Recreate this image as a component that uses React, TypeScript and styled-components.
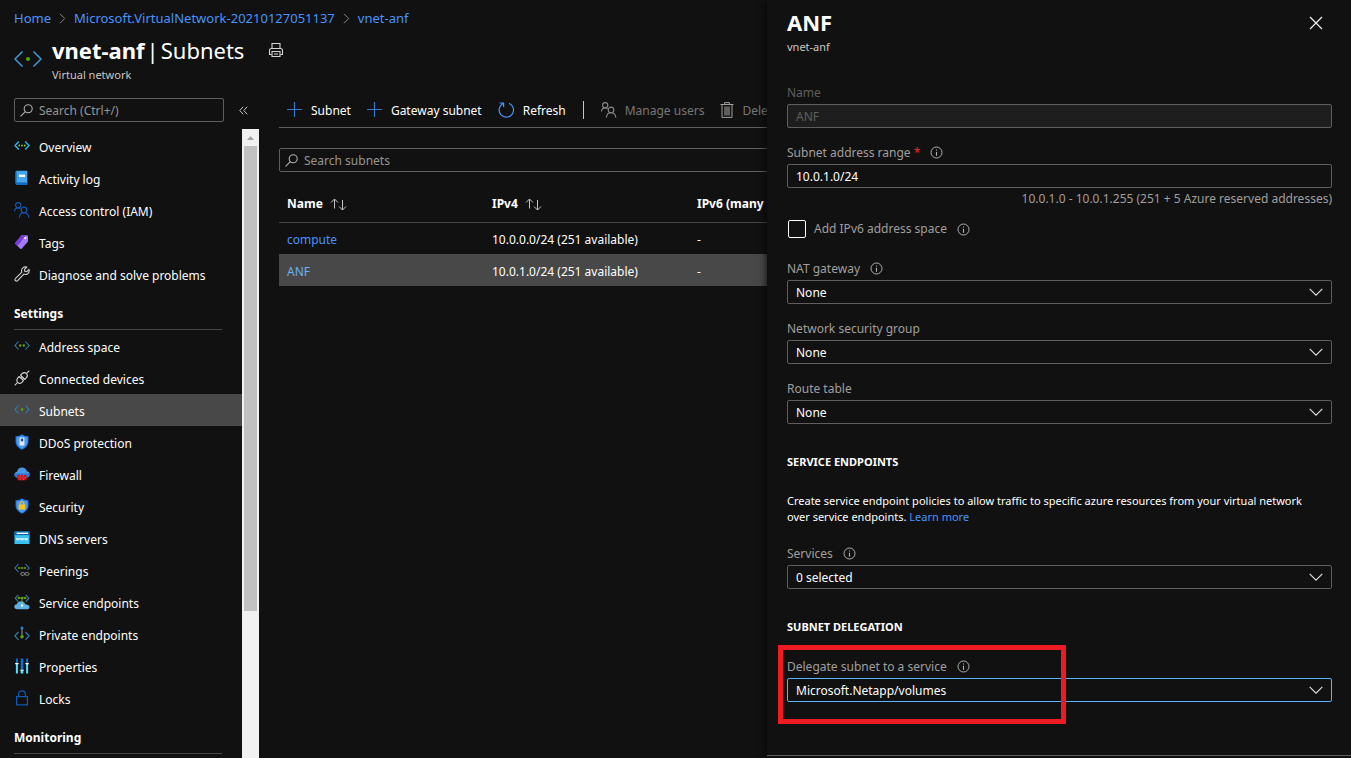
import React from "react";
import styled, { createGlobalStyle, css } from "styled-components";

const color = {
  bg: "#111111",
  text: "#ffffff",
  muted: "#a19f9d",
  dim: "#605e5c",
  line: "#605e5c",
  divider: "#484644",
  selected: "#484848",
  link: "#4894fe",
  focus: "#5cb3ff",
  danger: "#ed1c24",
};

const size = { small: "11px", base: "12px", crumb: "13px", title: "22px" };

const GlobalStyle = createGlobalStyle`
  *, *::before, *::after { box-sizing: border-box; }
  body {
    margin: 0;
    background: ${color.bg};
    color: ${color.text};
    font-family: "Noto Sans", "Open Sans", sans-serif;
    font-size: ${size.base};
    line-height: 16px;
  }
  h1, h2, p, ul { margin: 0; padding: 0; }
  button, input, select { font: inherit; color: inherit; }
  a { color: ${color.link}; text-decoration: none; }
`;

/* ---------- page frame ---------- */

const Page = styled.div`
  display: flex;
  height: 100vh;
  overflow: hidden;
`;

const Blade = styled.div`
  flex: 1;
  min-width: 0;
  display: flex;
  flex-direction: column;
  overflow: hidden;
`;

const Crumbs = styled.nav`
  display: flex;
  align-items: center;
  gap: 8px;
  height: 36px;
  padding-left: 14px;
  font-size: ${size.crumb};
  white-space: nowrap;
`;

const BladeHeader = styled.header`
  display: flex;
  align-items: flex-start;
  gap: 10px;
  height: 62px;
  padding-left: 14px;
  > svg { margin-top: 14px; }
`;

const TitleRow = styled.div`
  display: flex;
  align-items: center;
  gap: 24px;
`;

const Title = styled.h1`
  display: flex;
  gap: 2px;
  font-size: ${size.title};
  line-height: 28px;
  font-weight: 700;
  white-space: nowrap;
  span { font-weight: 400; }
`;

const Subtitle = styled.p`
  font-size: ${size.small};
  line-height: 22px;
  color: #c8c6c4;
`;

const IconButton = styled.button`
  display: flex;
  padding: 0;
  border: 0;
  background: none;
  cursor: pointer;
`;

const Body = styled.div`
  flex: 1;
  min-height: 0;
  display: flex;
`;

/* ---------- side menu ---------- */

const Sidebar = styled.aside`
  width: 259px;
  flex: none;
  display: flex;
  flex-direction: column;
`;

const SidebarTop = styled.div`
  display: flex;
  align-items: center;
  gap: 15px;
  height: 24px;
  margin-bottom: 7px;
  padding-left: 14px;
`;

const SearchBox = styled.label<{ $width?: string }>`
  display: flex;
  align-items: center;
  gap: 6px;
  flex: none;
  width: ${(p) => p.$width ?? "100%"};
  height: 24px;
  padding: 0 5px;
  border: 1px solid ${color.line};
  border-radius: 2px;
  input {
    flex: 1;
    min-width: 0;
    padding: 2px 0 0;
    border: 0;
    outline: 0;
    background: none;
  }
  input::placeholder { color: #979593; opacity: 1; }
`;

const MenuArea = styled.div`
  flex: 1;
  min-height: 0;
  display: flex;
  overflow: hidden;
`;

const Menu = styled.nav`
  flex: 1;
  padding-top: 1px;
  ul { list-style: none; }
`;

const MenuItem = styled.a<{ $active?: boolean }>`
  display: flex;
  align-items: center;
  gap: 9px;
  height: 32px;
  padding-left: 14px;
  color: ${color.text};
  ${(p) => p.$active && css`background: ${color.selected};`}
  span { padding-top: 3px; }
`;

const MenuHeading = styled.h2`
  height: 40px;
  margin: 0 20px 0 14px;
  padding-top: 16px;
  border-bottom: 1px solid ${color.divider};
  font-size: ${size.base};
  line-height: 16px;
  font-weight: 700;
`;

const ScrollTrack = styled.div`
  width: 17px;
  padding: 0 2px;
  background: #f1f1f1;
`;

const ScrollArrow = styled.div`
  display: flex;
  justify-content: center;
  align-items: center;
  height: 17px;
`;

const ScrollThumb = styled.div`
  height: 74%;
  background: #c1c1c1;
`;

/* ---------- subnet list ---------- */

const Content = styled.main`
  flex: 1;
  min-width: 0;
  padding-left: 20px;
  overflow: hidden;
`;

const ContentInner = styled.div`
  min-width: 820px;
`;

const Toolbar = styled.div`
  display: flex;
  align-items: center;
  gap: 16px;
  height: 30px;
  padding: 0 0 6px 8px;
  border-bottom: 1px solid ${color.line};
  margin-bottom: 20px;
`;

const ToolButton = styled.button`
  display: flex;
  align-items: center;
  gap: 8px;
  padding: 0;
  border: 0;
  background: none;
  white-space: nowrap;
  cursor: pointer;
  &:disabled { color: #797775; cursor: default; }
  span { padding-top: 3px; }
`;

const ToolDivider = styled.span`
  width: 1px;
  height: 18px;
  margin: 0 1px;
  background: #c8c6c4;
`;

const Table = styled.table`
  width: 100%;
  margin-top: 15px;
  border-collapse: collapse;
  table-layout: fixed;
  th, td {
    width: 205px;
    padding: 0 8px;
    text-align: left;
    white-space: nowrap;
  }
  th:last-child { width: auto; }
  th { height: 35px; font-weight: 700; border-bottom: 1px solid ${color.divider}; }
  td { height: 32px; padding-top: 3px; }
`;

const HeadCell = styled.span`
  display: flex;
  align-items: center;
  gap: 7px;
`;

const Row = styled.tr<{ $selected?: boolean }>`
  ${(p) => p.$selected && css`
    background: ${color.selected};
    a { color: #6cb0f5; }
  `}
`;

/* ---------- detail panel ---------- */

const Panel = styled.aside`
  z-index: 1;
  width: 584px;
  max-width: 100%;
  flex: none;
  display: flex;
  flex-direction: column;
  background: ${color.bg};
  box-shadow: 0 0 8px rgba(0, 0, 0, 0.9);
`;

const PanelHeader = styled.header`
  display: flex;
  justify-content: space-between;
  align-items: flex-start;
  height: 80px;
  padding: 8px 28px 0 20px;
  button { margin-top: 8px; }
`;

const Form = styled.form`
  flex: 1;
  padding: 0 19px 0 20px;
`;

const Stack = styled.div`
  display: flex;
  flex-direction: column;
  gap: 12px;
`;

const FieldBox = styled.div`
  position: relative;
`;

const LabelRow = styled.div<{ $dim?: boolean }>`
  display: flex;
  align-items: center;
  gap: 10px;
  height: 24px;
  color: ${(p) => (p.$dim ? color.dim : color.muted)};
  label { padding-top: 2px; }
`;

const Required = styled.span`
  color: #f1272f;
`;

const TextInput = styled.input`
  display: block;
  width: 100%;
  height: 24px;
  padding: 0 8px;
  border: 1px solid ${color.line};
  border-radius: 2px;
  background: ${color.bg};
  color: ${color.text};
  &:disabled { background: #1e1e1e; color: ${color.dim}; }
`;

const SelectWrap = styled.div`
  display: grid;
  align-items: center;
  > * { grid-area: 1 / 1; }
  svg { justify-self: end; margin-right: 9px; pointer-events: none; }
`;

const Select = styled.select<{ $focused?: boolean }>`
  appearance: none;
  width: 100%;
  height: 24px;
  padding: 2px 28px 0 8px;
  border: 1px solid ${(p) => (p.$focused ? color.focus : color.line)};
  border-radius: 2px;
  background: ${color.bg};
`;

const Hint = styled.p`
  height: 20px;
  line-height: 22px;
  text-align: right;
  color: ${color.muted};
`;

const CheckRow = styled.label`
  display: flex;
  align-items: center;
  gap: 8px;
  height: 18px;
  margin-bottom: 6px;
  padding-left: 1px;
  color: ${color.muted};
  span { margin-right: 2px; }
`;

const Checkbox = styled.input`
  appearance: none;
  width: 18px;
  height: 18px;
  margin: 0;
  border: 1px solid ${color.text};
  border-radius: 2px;
`;

const SectionTitle = styled.h2`
  margin-top: 30px;
  font-size: ${size.small};
  line-height: 16px;
  font-weight: 700;
`;

const Paragraph = styled.p`
  margin: 23px 0 16px;
  padding-right: 16px;
  font-size: ${size.small};
  line-height: 16px;
`;

const Delegation = styled.div`
  margin-top: 19px;
`;

const Highlight = styled.div`
  position: absolute;
  top: -9px;
  bottom: -22px;
  left: -9px;
  width: 288px;
  border: 5px solid ${color.danger};
  pointer-events: none;
`;

const PanelFooter = styled.footer`
  height: 3px;
  border-top: 1px solid ${color.line};
`;

/* ---------- icons ---------- */

const IconSvg = styled.svg`
  flex: none;
`;

const Svg = ({ w = 16, h = 16, children }: { w?: number; h?: number; children: React.ReactNode }) => (
  <IconSvg width={w} height={h} viewBox={`0 0 ${w} ${h}`} fill="none" aria-hidden="true">
    {children}
  </IconSvg>
);

const Angles = ({ c = "#357fb2", y = 7.5 }: { c?: string; y?: number }) => (
  <path d={`M4.6 ${y - 4}L.9 ${y}l3.7 4M11.4 ${y - 4}l3.7 4-3.7 4`} stroke={c} strokeWidth="1.1" />
);

const Dots = ({ xs, r = 1, y = 7.5, c = "#5ea30a" }: { xs: number[]; r?: number; y?: number; c?: string }) => (
  <>{xs.map((x) => <circle key={x} cx={x} cy={y} r={r} fill={c} />)}</>
);

const PeoplePaths = ({ c }: { c: string }) => (
  <g stroke={c} strokeWidth="1.1">
    <circle cx="4.2" cy="3.2" r="2.6" />
    <path d="M.5 9.6C.6 7.4 2 5.9 4.2 5.9c1 0 1.7.3 2.4.8" />
    <circle cx="10" cy="7.9" r="2.8" />
    <path d="M5.4 15.6c.2-2.8 2-4.8 4.6-4.8s4.5 2 4.9 4.8" />
  </g>
);

const ShieldBase = () => (
  <>
    <path d="M8 .3c1.700 1.400 3.900 1.800 6.500 1.900v5.200c0 4-2.900 6.600-6.500 8.400-3.600-1.800-6.500-4.400-6.500-8.400V2.200C4.100 2.100 6.300 1.700 8 .3z" fill="#1f6fd6" />
    <path d="M8 1.500c1.600 1.100 3.400 1.500 5.500 1.700v4.300c0 3.400-2.400 5.600-5.500 7.200-3.100-1.600-5.500-3.800-5.500-7.200V3.200C4.600 3 6.400 2.600 8 1.500z" fill="#4a9bf2" />
  </>
);

const icons = {
  overview: (
    <Svg>
      <path d="M4.800 3.500L1 7.500l3.800 4M11.200 3.500l3.800 4-3.800 4" stroke="#32aede" strokeWidth="1.600" />
      <Dots xs={[5.2, 8, 10.8]} r={0.9} c="#86d633" />
    </Svg>
  ),
  log: (
    <Svg>
      <path d="M1.600 2c0-.8.500-1.300 1.300-1.300h10.400v12.600H2.900c-.8 0-1.300.4-1.300.9z" fill="#45a5ee" />
      <path d="M1.600 13.600c0-.7.500-1.100 1.300-1.100h10.400v2.600H2.900c-.8 0-1.300-.6-1.300-1.500z" fill="#0f6cbd" />
      <path d="M1.600 2v11l1.400-.4V.8z" fill="#1b7fd4" />
      <rect x="5" y="4.700" width="6" height="2.300" fill="#fff" />
    </Svg>
  ),
  people: <Svg><PeoplePaths c="#1459b8" /></Svg>,
  tags: (
    <Svg>
      <path d="M7.900.9l5.400.7c.4 0 .7.300.7.700v5.300l-6.300 7.100c-.4.500-1 .5-1.400.1L1.500 10c-.4-.4-.4-.9 0-1.400z" fill="#a67af4" />
      <path d="M7.900.9L1.500 8.600c-.4.500-.4 1 0 1.400l1.900 1.900L11.600 1.400z" fill="#773adc" />
      <circle cx="11.300" cy="4" r="1.100" fill="#fff" />
    </Svg>
  ),
  wrench: (
    <Svg>
      <path d="M12.800 1.100L10.500 3.400l.3 1.900 1.900.3 2.300-2.300c.6 2-.1 3.700-1.500 4.600-1.200.7-2.500.7-3.600.2L3.700 14.600c-.7.700-1.600.7-2.300.1s-.6-1.700.1-2.300l6.400-6.300c-.5-1.200-.4-2.500.4-3.600 1-1.400 2.700-2 4.500-1.400z" stroke="#d6d4d2" strokeWidth="1.100" strokeLinejoin="round" />
    </Svg>
  ),
  address: <Svg><Angles /><Dots xs={[6.2, 9.8]} r={1.2} /></Svg>,
  plug: (
    <Svg>
      <g stroke="#d6d4d2" strokeWidth="1.100" strokeLinejoin="round">
        <path d="M.7 15.300l2.700-2.700M12.600 3.400L15.300.7" />
        <path d="M5.300 6.500l4.200 4.200-1.600 1.600c-1.200 1.200-3 1.200-4.200 0s-1.200-3 0-4.200z" />
        <path d="M10.900 9.500L6.500 5.100l1.700-1.600c1.200-1.200 3.100-1.200 4.200 0s1.200 3 0 4.200z" />
        <path d="M6.500 7.800l1.500-1.500M8.300 9.600l1.500-1.500" />
      </g>
    </Svg>
  ),
  subnets: <Svg><Angles /><Dots xs={[8]} r={1.3} /></Svg>,
  ddos: (
    <Svg>
      <ShieldBase />
      <rect x="5.600" y="3.600" width="4.800" height="7.800" rx=".5" fill="#e8e8e8" />
      <rect x="6.800" y="4.600" width="2.400" height="2.800" fill="#1b4f8f" />
    </Svg>
  ),
  firewall: (
    <Svg>
      <path d="M3.700 11.600C1.900 11.600.4 10.500.4 8.700c0-1.700 1.200-2.800 2.700-3C3.500 3.100 5.500 1.500 8 1.500c2.400 0 4.300 1.500 4.900 3.700 1.600.2 2.800 1.500 2.800 3.200 0 1.900-1.500 3.200-3.400 3.200z" fill="#4a96e8" />
      <path d="M.6 7.600h15c.6 2.300-1 4-3.300 4H3.700C1.500 11.600 0 9.800.6 7.600z" fill="#2f74d0" />
      <rect x="3.500" y="9" width="9" height="5.200" rx=".6" fill="#c8141e" />
      <path d="M6.500 9v1.600M9.500 9v1.600M8 10.700v1.700M5 10.700v1.700M11 10.700v1.700M6.500 12.500v1.700M9.500 12.500v1.700" stroke="#e86a6a" strokeWidth=".6" />
    </Svg>
  ),
  security: (
    <Svg>
      <ShieldBase />
      <path d="M6.200 7.200V5.400c0-2.300 3.600-2.300 3.600 0v1.800" stroke="#e8b923" strokeWidth="1.200" />
      <rect x="4.700" y="6.500" width="6.600" height="5" rx=".5" fill="#fcc419" />
    </Svg>
  ),
  dns: (
    <Svg>
      <rect x=".5" y="1.500" width="15" height="12.500" rx=".6" fill="#37c2f1" />
      <rect x=".5" y="1.500" width="15" height="3.600" fill="#0b62ad" />
      <rect x="2.600" y="2.600" width="11.600" height="1.400" fill="#fff" />
      <path d="M2.300 8l.8 2.200.8-2 .8 2L5.500 8M6.400 8l.8 2.200.8-2 .8 2L9.600 8M10.500 8l.8 2.200.8-2 .8 2L13.700 8" stroke="#fff" strokeWidth=".8" />
    </Svg>
  ),
  peerings: (
    <Svg>
      <path d="M4.500 2L.9 6l3.600 4M11.500 2l3.600 4-1.800 2" stroke="#357fb2" strokeWidth="1.100" />
      <path d="M4 6h8" stroke="#4f8a10" strokeWidth=".8" />
      <Dots xs={[5, 8, 11]} y={6} r={0.9} />
      <rect x="6.700" y="10.600" width="4.200" height="2.600" rx="1.300" stroke="#8a8886" />
      <rect x="10.900" y="10.600" width="4.200" height="2.600" rx="1.300" stroke="#8a8886" />
    </Svg>
  ),
  service: (
    <Svg>
      <path d="M4.300.8L1.200 4.200l3.100 3.500M11.700.8l3.100 3.400-3.100 3.500" stroke="#3b7ea8" strokeWidth="1.100" />
      <path d="M3.200 15.300c-1.700 0-2.900-1-2.900-2.500 0-1.400 1-2.400 2.500-2.500.5-2 2.200-3.100 4.200-3.100s3.900 1.200 4.500 3.300c2.400-.2 4 .9 4 2.500 0 1.400-1.200 2.300-2.800 2.300z" fill="#5cb4e4" />
      <path d="M8 4v7.500M4 4h8" stroke="#7fb04a" strokeWidth=".9" />
      <Dots xs={[4.8, 8, 11.2]} y={4} r={1.2} />
      <circle cx="8" cy="11.500" r="1.200" fill="#fff" />
    </Svg>
  ),
  priv: (
    <Svg>
      <path d="M4.500 6L.9 9.800l3.600 4M11.500 6l3.600 3.800-3.600 4" stroke="#357fb2" strokeWidth="1.200" />
      <path d="M8 3v7" stroke="#8a8886" strokeWidth="1.200" />
      <circle cx="8" cy="2" r="1.500" fill="#2f86d0" />
      <circle cx="8" cy="10.800" r="1.800" fill="#5ea30a" />
    </Svg>
  ),
  properties: (
    <Svg>
      <path d="M2.900.500v5M13.100.500v5" stroke="#0f6fd0" strokeWidth="2" />
      <path d="M2.900 5.500v10M13.100 5.500v10" stroke="#50e0ff" strokeWidth="2" />
      <path d="M8 .500v11.500" stroke="#0f6fd0" strokeWidth="2.600" />
      <path d="M8 12.500v3" stroke="#50e0ff" strokeWidth="2.600" />
      <path d="M1.200 5.600h3.400M11.400 5.600h3.400M6.200 12.300h3.600" stroke="#fff" strokeWidth="1.100" />
    </Svg>
  ),
  locks: (
    <Svg>
      <g stroke="#1459b8" strokeWidth="1.200">
        <rect x="2.600" y="6.600" width="10.800" height="8.300" />
        <path d="M4.600 6.500V4.200C4.600 2 6 .8 8 .8s3.400 1.200 3.400 3.400v2.300" />
      </g>
    </Svg>
  ),
};

const Magnifier = () => (
  <Svg w={13} h={13}>
    <circle cx="8.200" cy="4.800" r="4" stroke="#b3b0ad" strokeWidth="1.100" />
    <path d="M5.300 7.700L.6 12.400" stroke="#b3b0ad" strokeWidth="1.100" />
  </Svg>
);

const Info = () => (
  <Svg w={13} h={13}>
    <circle cx="6.500" cy="6.500" r="5.500" stroke="#b3b0ad" />
    <path d="M6.500 5.700v4M6.500 3.400v1.200" stroke="#b3b0ad" strokeWidth="1.100" />
  </Svg>
);

const Caret = () => (
  <Svg w={14} h={8}>
    <path d="M.7.900L7 7.100 13.300.900" stroke="#e1dfdd" strokeWidth="1.200" />
  </Svg>
);

const CrumbArrow = () => (
  <Svg w={7} h={11}>
    <path d="M1 .8l4.700 4.700L1 10.200" stroke="#8a8886" />
  </Svg>
);

const Plus = () => (
  <Svg>
    <path d="M7.500 0v15M0 7.500h15" stroke="#3a76cf" strokeWidth="1.200" />
  </Svg>
);

const Sort = () => (
  <Svg w={17} h={13}>
    <path d="M4.500 10.500v-9M1 4.500l3.500-3.500L8 4.500M12.500 2v10M9 8.500l3.500 3.500L16 8.500" stroke="#c8c6c4" />
  </Svg>
);

/* ---------- data ---------- */

type IconName = keyof typeof icons;

const generalItems: [IconName, string][] = [
  ["overview", "Overview"],
  ["log", "Activity log"],
  ["people", "Access control (IAM)"],
  ["tags", "Tags"],
  ["wrench", "Diagnose and solve problems"],
];

const settingsItems: [IconName, string][] = [
  ["address", "Address space"],
  ["plug", "Connected devices"],
  ["subnets", "Subnets"],
  ["ddos", "DDoS protection"],
  ["firewall", "Firewall"],
  ["security", "Security"],
  ["dns", "DNS servers"],
  ["peerings", "Peerings"],
  ["service", "Service endpoints"],
  ["priv", "Private endpoints"],
  ["properties", "Properties"],
  ["locks", "Locks"],
];

const subnets = [
  { name: "compute", ipv4: "10.0.0.0/24 (251 available)", ipv6: "-" },
  { name: "ANF", ipv4: "10.0.1.0/24 (251 available)", ipv6: "-", selected: true },
];

const MenuList = ({ items }: { items: [IconName, string][] }) => (
  <ul>
    {items.map(([icon, label]) => (
      <li key={label}>
        <MenuItem href="#" $active={label === "Subnets"}>
          {icons[icon]}
          <span>{label}</span>
        </MenuItem>
      </li>
    ))}
  </ul>
);

const SelectField = ({ id, label, value, info, focused }: { id: string; label: string; value: string; info?: boolean; focused?: boolean }) => (
  <div>
    <LabelRow>
      <label htmlFor={id}>{label}</label>
      {info && <Info />}
    </LabelRow>
    <SelectWrap>
      <Select id={id} $focused={focused} defaultValue={value}>
        <option>{value}</option>
      </Select>
      <Caret />
    </SelectWrap>
  </div>
);

export default function App() {
  return (
    <Page>
      <GlobalStyle />
      <Blade>
        <Crumbs aria-label="Breadcrumb">
          <a href="#">Home</a>
          <CrumbArrow />
          <a href="#">Microsoft.VirtualNetwork-20210127051137</a>
          <CrumbArrow />
          <a href="#">vnet-anf</a>
        </Crumbs>
        <BladeHeader>
          <Svg w={28} h={18}>
            <path d="M8.500 1.500L1 9l7.500 7.500M19.500 1.500L27 9l-7.500 7.500" stroke="#3f9bd6" strokeWidth="1.500" />
            <circle cx="14" cy="9" r="2" fill="#57a300" />
          </Svg>
          <div>
            <TitleRow>
              <Title>vnet-anf<span>|</span><span>Subnets</span></Title>
              <IconButton type="button" aria-label="Print">
                <Svg>
                  <g stroke="#d6d4d2" strokeWidth="1.100">
                    <path d="M4 6.500v-5h8v5" />
                    <path d="M3.500 12.500h-2v-4c0-1.200.8-2 2-2h9c1.200 0 2 .8 2 2v4h-2" />
                    <path d="M4 9.500h8v5H4zM6 12h4" />
                  </g>
                </Svg>
              </IconButton>
            </TitleRow>
            <Subtitle>Virtual network</Subtitle>
          </div>
        </BladeHeader>
        <Body>
          <Sidebar>
            <SidebarTop>
              <SearchBox $width="210px">
                <Magnifier />
                <input type="text" placeholder="Search (Ctrl+/)" aria-label="Search menu" />
              </SearchBox>
              <IconButton type="button" aria-label="Collapse menu">
                <Svg w={9} h={9}>
                  <path d="M4.200.700L.8 4.500l3.400 3.800M8.200.700L4.800 4.500l3.400 3.800" stroke="#c8c6c4" />
                </Svg>
              </IconButton>
            </SidebarTop>
            <MenuArea>
              <Menu aria-label="Resource menu">
                <MenuList items={generalItems} />
                <MenuHeading>Settings</MenuHeading>
                <MenuList items={settingsItems} />
                <MenuHeading>Monitoring</MenuHeading>
              </Menu>
              <ScrollTrack>
                <ScrollArrow>
                  <Svg w={7} h={4}><path d="M3.500 0L7 4H0z" fill="#a3a3a3" /></Svg>
                </ScrollArrow>
                <ScrollThumb />
              </ScrollTrack>
            </MenuArea>
          </Sidebar>
          <Content>
            <ContentInner>
              <Toolbar>
                <ToolButton type="button"><Plus /><span>Subnet</span></ToolButton>
                <ToolButton type="button"><Plus /><span>Gateway subnet</span></ToolButton>
                <ToolButton type="button">
                  <Svg w={17} h={16}>
                    <path d="M11 1.200A7.200 7.200 0 1 1 5 1.500M1.600 1h4v4" stroke="#4894fe" strokeWidth="1.200" />
                  </Svg>
                  <span>Refresh</span>
                </ToolButton>
                <ToolDivider />
                <ToolButton type="button" disabled><Svg><PeoplePaths c="#8a8886" /></Svg><span>Manage users</span></ToolButton>
                <ToolButton type="button" disabled>
                  <Svg w={14} h={16}>
                    <path d="M4.500 2V.6h5V2M.5 2.500h13M2 2.500v12.900h10V2.500" stroke="#a19f9d" />
                    <path d="M4 4.500h6v9H4z" fill="#605e5c" />
                  </Svg>
                  <span>Delete</span>
                </ToolButton>
              </Toolbar>
              <SearchBox>
                <Magnifier />
                <input type="text" placeholder="Search subnets" aria-label="Search subnets" />
              </SearchBox>
              <Table>
                <thead>
                  <tr>
                    <th><HeadCell>Name<Sort /></HeadCell></th>
                    <th><HeadCell>IPv4<Sort /></HeadCell></th>
                    <th><HeadCell>IPv6 (many available)<Sort /></HeadCell></th>
                  </tr>
                </thead>
                <tbody>
                  {subnets.map((s) => (
                    <Row key={s.name} $selected={s.selected}>
                      <td><a href="#">{s.name}</a></td>
                      <td>{s.ipv4}</td>
                      <td>{s.ipv6}</td>
                    </Row>
                  ))}
                </tbody>
              </Table>
            </ContentInner>
          </Content>
        </Body>
      </Blade>

      <Panel>
        <PanelHeader>
          <div>
            <Title as="h2">ANF</Title>
            <Subtitle>vnet-anf</Subtitle>
          </div>
          <IconButton type="button" aria-label="Close">
            <Svg w={14} h={14}>
              <path d="M1 1l12 12M13 1L1 13" stroke="#f3f2f1" strokeWidth="1.200" />
            </Svg>
          </IconButton>
        </PanelHeader>
        <Form>
          <Stack>
            <div>
              <LabelRow $dim><label htmlFor="name">Name</label></LabelRow>
              <TextInput id="name" type="text" defaultValue="ANF" disabled />
            </div>
            <div>
              <LabelRow>
                <label htmlFor="range">Subnet address range <Required>*</Required></label>
                <Info />
              </LabelRow>
              <TextInput id="range" type="text" defaultValue="10.0.1.0/24" />
              <Hint>10.0.1.0 - 10.0.1.255 (251 + 5 Azure reserved addresses)</Hint>
            </div>
            <CheckRow>
              <Checkbox type="checkbox" />
              <span>Add IPv6 address space</span>
              <Info />
            </CheckRow>
            <SelectField id="nat" label="NAT gateway" value="None" info />
            <SelectField id="nsg" label="Network security group" value="None" />
            <SelectField id="route" label="Route table" value="None" />
          </Stack>
          <SectionTitle>SERVICE ENDPOINTS</SectionTitle>
          <Paragraph>
            Create service endpoint policies to allow traffic to specific azure resources from your virtual network
            over service endpoints. <a href="#">Learn more</a>
          </Paragraph>
          <SelectField id="services" label="Services" value="0 selected" info />
          <SectionTitle>SUBNET DELEGATION</SectionTitle>
          <Delegation>
            <FieldBox>
              <SelectField id="delegate" label="Delegate subnet to a service" value="Microsoft.Netapp/volumes" info focused />
              <Highlight />
            </FieldBox>
          </Delegation>
        </Form>
        <PanelFooter />
      </Panel>
    </Page>
  );
}
